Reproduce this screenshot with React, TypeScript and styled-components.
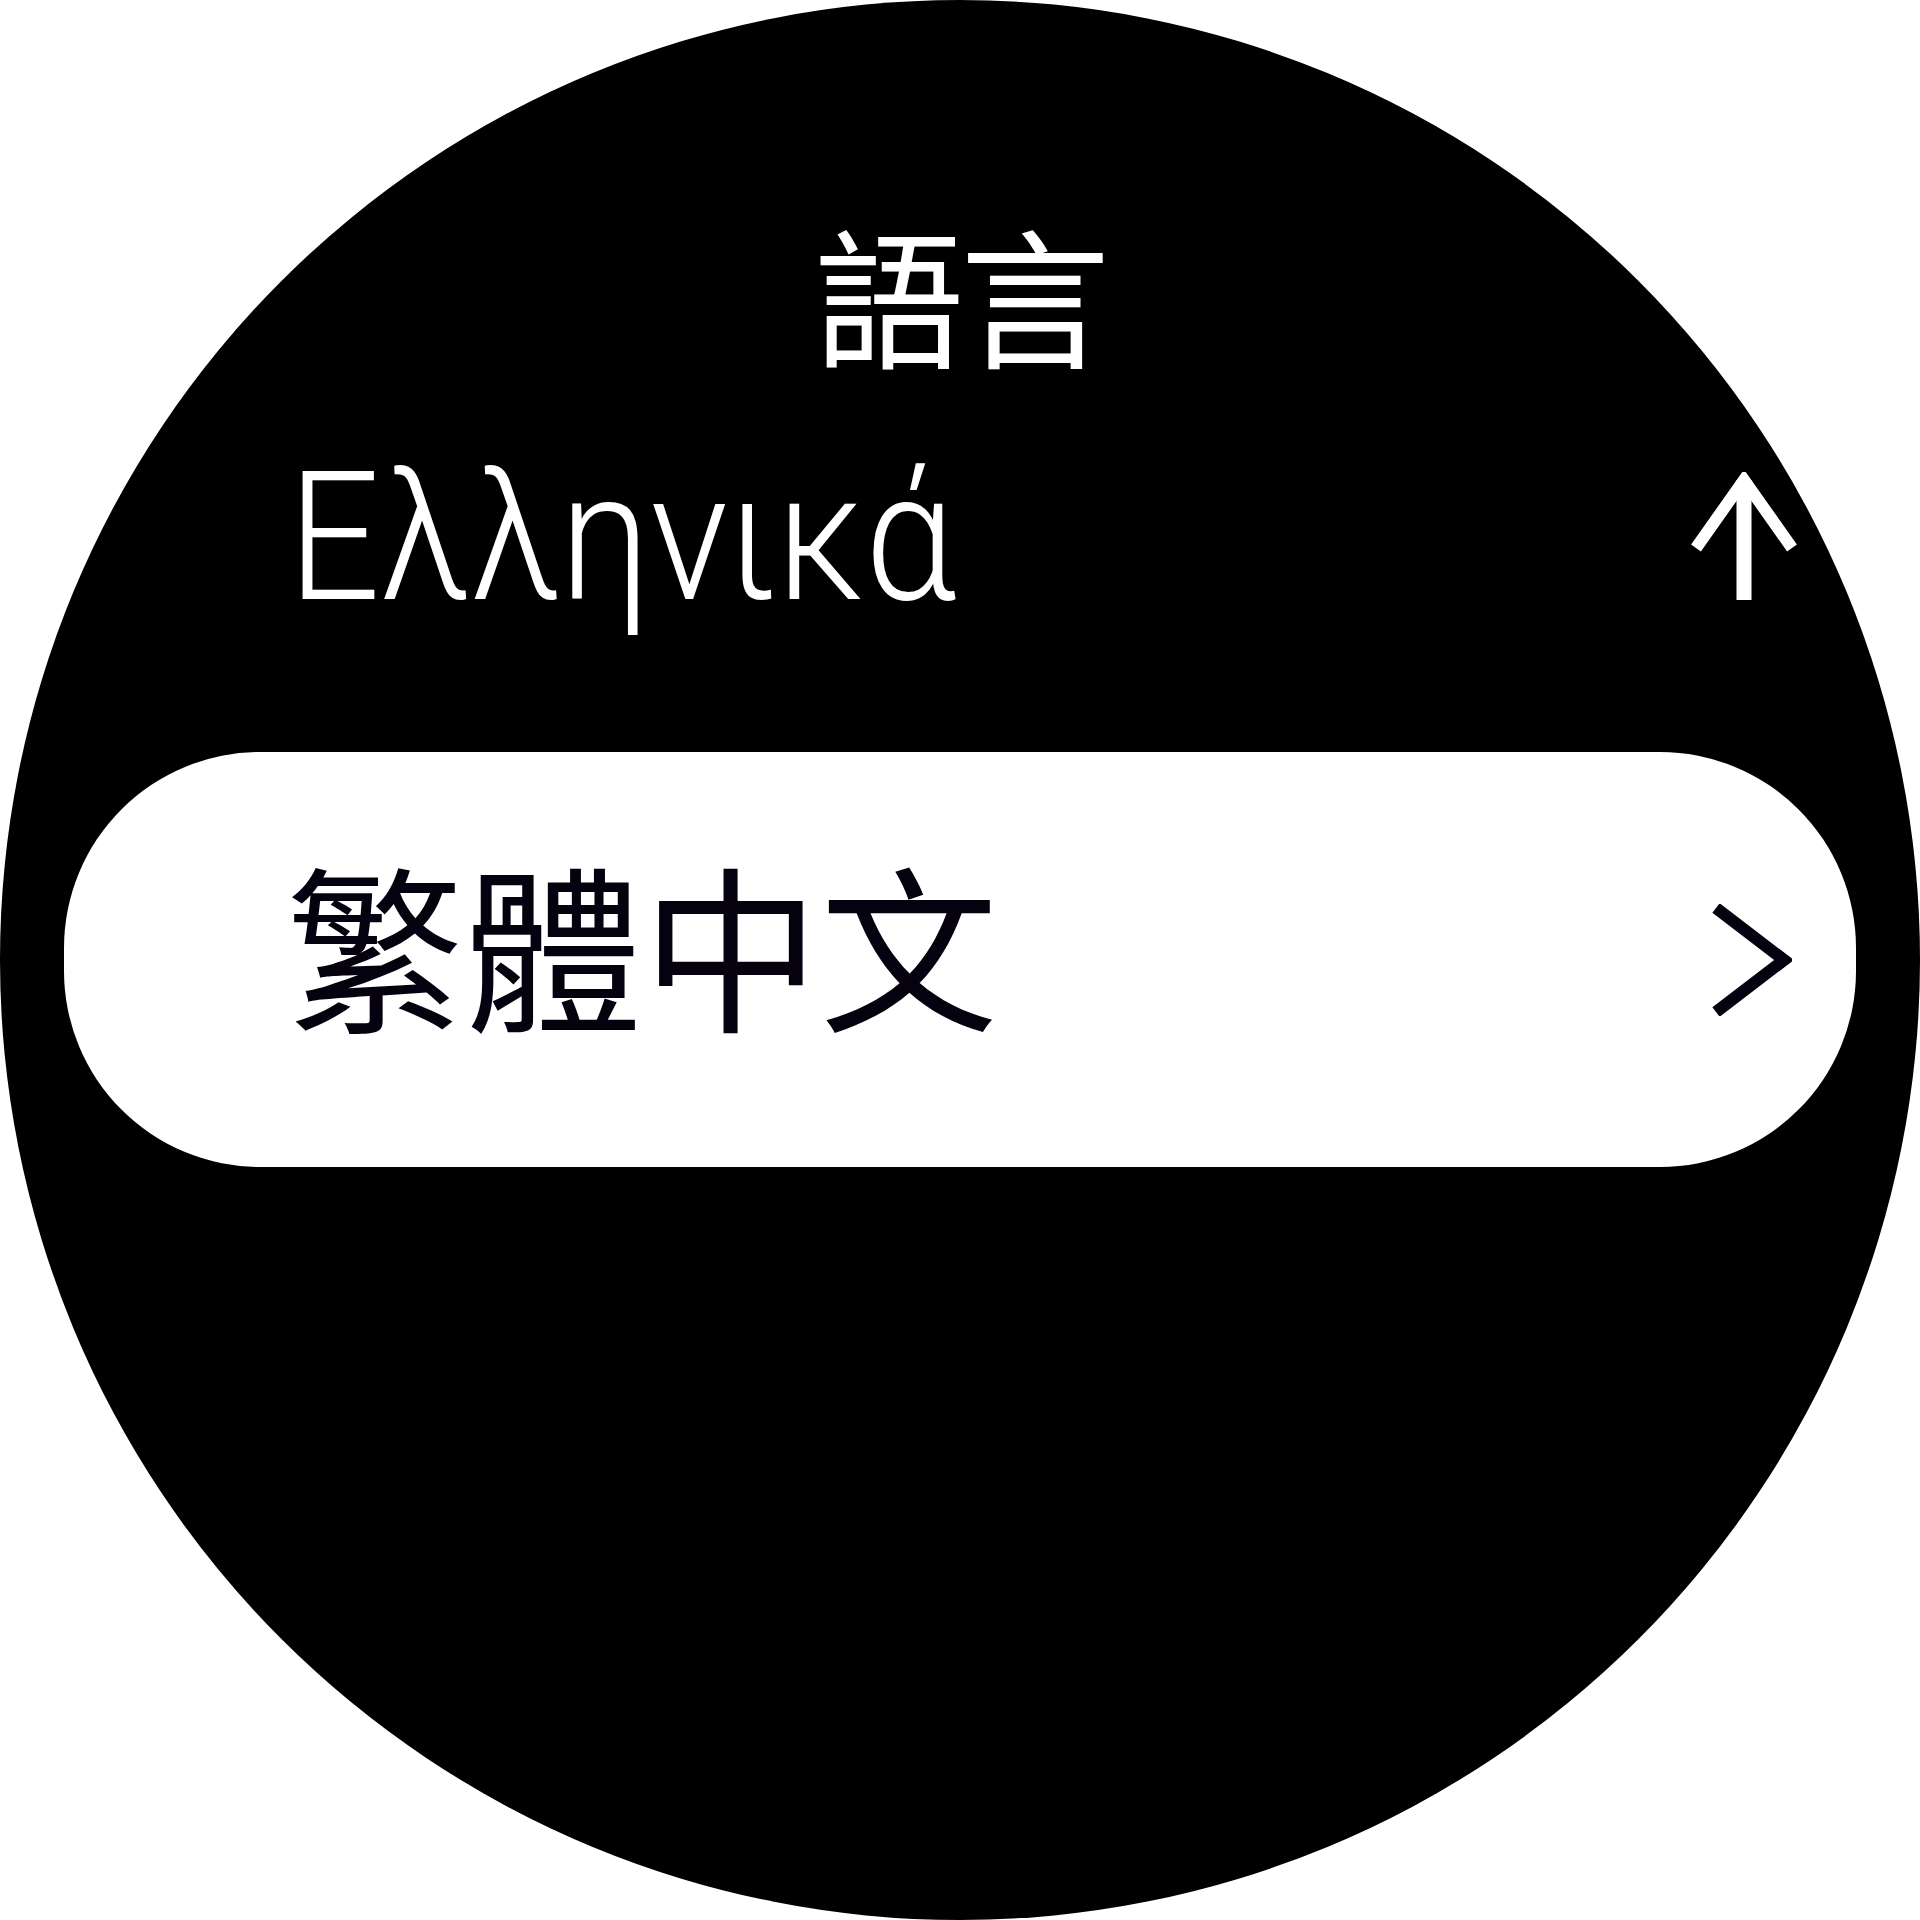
import React from 'react';
import styled, { createGlobalStyle } from 'styled-components';

const Global = createGlobalStyle`
  html, body { margin: 0; padding: 0; background: #ffffff; }
  body { width: 1920px; height: 1920px; overflow: hidden; }
  #root { width: 1920px; height: 1920px; }
`;

const Watch = styled.div`
  width: 1920px;
  height: 1920px;
  box-sizing: border-box;
  border-radius: 50%;
  background: #000000;
  overflow: hidden;
  display: flex;
  flex-direction: column;
  padding-top: 202px;
`;

const Title = styled.h1`
  margin: 0;
  height: 180px;
  text-align: center;
  color: #ffffff;
  font-family: "Noto Sans CJK TC", "Noto Sans CJK SC", sans-serif;
  font-weight: 400;
  font-size: 150px;
  line-height: 180px;
  letter-spacing: -4px;
`;

const Row = styled.div`
  margin-top: 56px;
  height: 200px;
  display: flex;
  align-items: flex-start;
  justify-content: space-between;
  padding: 0 120px 0 288px;
`;

const RowLabel = styled.span`
  display: block;
  color: #ffffff;
  font-family: Roboto, "Liberation Sans", sans-serif;
  font-weight: 300;
  font-size: 180px;
  line-height: 200px;
  white-space: nowrap;
  transform: scaleX(0.9);
  transform-origin: left center;
`;

const ArrowIcon = styled.svg`
  display: block;
  margin-top: 34px;
  width: 112px;
  height: 128px;
  flex: none;
`;

const Pill = styled.div`
  margin: 114px 64px 0;
  height: 415px;
  border-radius: 196px;
  background: #ffffff;
  display: flex;
  align-items: center;
  justify-content: space-between;
  padding: 0 64px 0 222px;
`;

const PillLabel = styled.span`
  display: block;
  margin-bottom: 36px;
  color: #05010f;
  font-family: "Noto Sans CJK TC", "Noto Sans CJK SC", sans-serif;
  font-weight: 400;
  font-size: 178px;
  line-height: 178px;
  white-space: nowrap;
`;

const ChevronIcon = styled.svg`
  display: block;
  width: 80px;
  height: 112px;
  flex: none;
`;

export default function App() {
  return (
    <>
      <Global />
      <Watch>
        <Title>語言</Title>
        <Row>
          <RowLabel>Ελληνικά</RowLabel>
          <ArrowIcon width="112" height="128" viewBox="0 0 112 128" fill="none">
            <path d="M56 8 V128" stroke="#ffffff" strokeWidth="15" />
            <path d="M8 76 L56 8 L104 76" stroke="#ffffff" strokeWidth="12" strokeLinejoin="miter" />
          </ArrowIcon>
        </Row>
        <Pill>
          <PillLabel>繁體中文</PillLabel>
          <ChevronIcon width="80" height="112" viewBox="0 0 80 112" fill="none">
            <path d="M4 4 L72 56 L4 108" stroke="#05010f" strokeWidth="12" strokeLinejoin="miter" />
          </ChevronIcon>
        </Pill>
      </Watch>
    </>
  );
}
